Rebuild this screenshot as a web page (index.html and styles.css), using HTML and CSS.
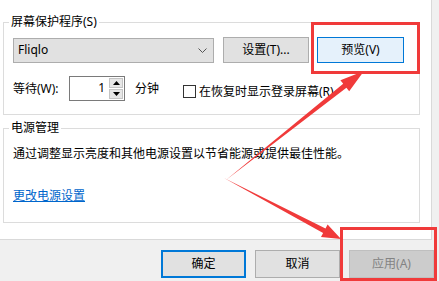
FILE: index.html
```html
<!DOCTYPE html>
<html lang="zh-CN">
<head>
<meta charset="utf-8">
<title>屏幕保护程序设置</title>
<link rel="stylesheet" href="styles.css">
</head>
<body>
<div class="dialog">
  <div class="page">
    <fieldset class="group g1">
      <legend>屏幕保护程序(S)</legend>
      <div class="row r1">
        <div class="combo"><span>Fliqlo</span>
          <svg class="chev" width="9" height="5" viewBox="0 0 9 5"><path d="M0.5 0.5 L4.5 4.5 L8.5 0.5" fill="none" stroke="#555" stroke-width="1"/></svg>
        </div>
        <div class="btn settings">设置(T)...</div>
        <div class="btn preview">预览(V)</div>
      </div>
      <div class="row r2">
        <span class="lbl">等待(W):</span>
        <div class="spin">
          <span class="val">1</span>
          <div class="spinbtns">
            <span class="sb up"><svg width="7" height="4" viewBox="0 0 7 4"><path d="M3.5 0 L7 4 L0 4 Z" fill="#000"/></svg></span>
            <span class="sb down"><svg width="7" height="4" viewBox="0 0 7 4"><path d="M0 0 L7 0 L3.5 4 Z" fill="#000"/></svg></span>
          </div>
        </div>
        <span class="unit">分钟</span>
        <div class="chk"><span class="box"></span><span>在恢复时显示登录屏幕(R)</span></div>
      </div>
    </fieldset>
    <fieldset class="group g2">
      <legend>电源管理</legend>
      <p class="desc">通过调整显示亮度和其他电源设置以节省能源或提供最佳性能。</p>
      <a class="link" href="#">更改电源设置</a>
    </fieldset>
  </div>
  <div class="footer">
    <div class="btn fbtn default">确定</div>
    <div class="btn fbtn">取消</div>
    <div class="btn fbtn disabled">应用(A)</div>
  </div>
  <svg class="annot" width="439" height="281" viewBox="0 0 439 281">
    <rect x="312.5" y="23.5" width="106" height="49" fill="none" stroke="#f03a3a" stroke-width="3"/>
    <rect x="341.5" y="228.5" width="94" height="51" fill="none" stroke="#f03a3a" stroke-width="3"/>
    <polygon points="226,180 346.4,87.7 349.2,91.2 364,71 340.4,80.2 343.2,83.7" fill="#f03a3a"/>
    <polygon points="224,178 323.1,232.9 321,236.9 341,239 327.6,224.5 325.5,228.5" fill="#f03a3a"/>
  </svg>
</div>
</body>
</html>
```

FILE: styles.css
```css
* { box-sizing: border-box; }
html, body { margin: 0; padding: 0; }
body {
  width: 439px;
  height: 281px;
  overflow: hidden;
  background: #f0f0f0;
  font-family: "Noto Sans", "Noto Sans CJK SC", sans-serif;
  font-size: 12px;
  color: #000;
}
.dialog { position: relative; width: 439px; height: 281px; }
.page {
  width: 432px;
  height: 240px;
  background: #fff;
  border-right: 1px solid #d9d9d9;
  border-bottom: 1px solid #d9d9d9;
  padding-top: 14px;
}
.group {
  margin: 0 0 0 3px;
  width: 417px;
  border: 1px solid #dcdcdc;
  padding: 0 0 13px 9px;
  min-width: 0;
}
.group legend {
  padding: 0 2px;
  margin-left: -4px;
  line-height: 16px;
  height: 16px;
}
.g2 { margin-top: 5px; padding-bottom: 18px; }
.row { display: flex; align-items: center; }
.r1 { margin-top: 7px; height: 26px; }
.r2 { margin-top: 13px; height: 25px; }
.combo {
  width: 201px;
  height: 25px;
  background: #e1e1e1;
  border: 1px solid #adadad;
  display: flex;
  align-items: center;
  justify-content: space-between;
  padding: 0 6px 0 4px;
  line-height: 16px;
}
.chev { display: block; }
.btn {
  height: 26px;
  background: #e1e1e1;
  border: 1px solid #adadad;
  display: flex;
  align-items: center;
  justify-content: center;
  line-height: 16px;
}
.settings { width: 86px; margin-left: 9px; }
.preview { width: 87px; margin-left: 8px; background: #e5f1fb; border-color: #0078d7; }
.lbl { width: 56px; line-height: 16px; }
.spin {
  width: 56px;
  height: 25px;
  border: 1px solid #7a7a7a;
  display: flex;
  background: #fff;
}
.val {
  flex: 1;
  text-align: right;
  padding-right: 4px;
  line-height: 22px;
}
.spinbtns {
  width: 15px;
  display: flex;
  flex-direction: column;
  padding: 1px 1px 1px 0;
  gap: 1px;
}
.sb {
  flex: 1;
  background: #e6e6e6;
  border: 1px solid #c4c4c4;
  display: flex;
  align-items: center;
  justify-content: center;
}
.sb svg { display: block; }
.unit { margin-left: 10px; line-height: 16px; }
.chk {
  display: flex;
  align-items: center;
  margin-left: 24px;
  margin-top: 6px;
  line-height: 16px;
}
.box {
  width: 13px;
  height: 13px;
  border: 1px solid #333;
  background: #fff;
  margin-right: 3px;
}
.desc { margin: 10px 0 0 0; line-height: 16px; }
.link {
  display: inline-block;
  margin-top: 26px;
  line-height: 16px;
  color: #0066cc;
  text-decoration: underline;
}
.footer {
  display: flex;
  justify-content: flex-end;
  gap: 9px;
  padding: 10px 5px 0 0;
}
.fbtn { width: 85px; height: 28px; }
.default { border: 2px solid #0078d7; }
.disabled { background: #cccccc; border-color: #bfbfbf; color: #838383; }
.annot { position: absolute; left: 0; top: 0; pointer-events: none; }
```
